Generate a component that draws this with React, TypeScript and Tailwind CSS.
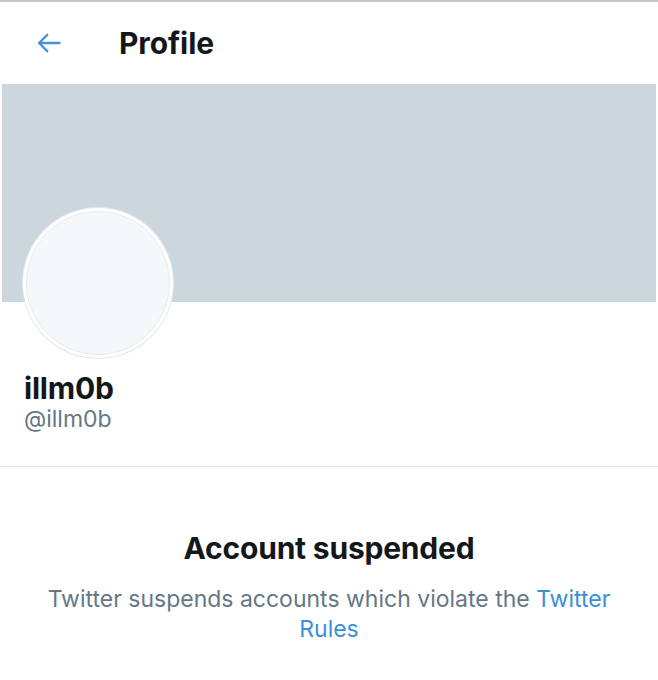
export default function App() {
  return (
    <div className="w-[658px] h-[680px] bg-white overflow-hidden font-['Inter',sans-serif] text-[#14171a]">
      {/* Header */}
      <div className="h-[84px] border-t-2 border-[#c8c8c8] flex items-center">
        <svg className="ml-[35px] w-[28px] h-[28px] text-[#4a90d9]" viewBox="0 0 24 24" fill="none" stroke="currentColor" strokeWidth="2" strokeLinecap="round" strokeLinejoin="round">
          <path d="M21 12H3.5M10.5 5l-7 7 7 7" />
        </svg>
        <h1 className="ml-[56px] text-[30px] font-bold tracking-[-0.1px]">Profile</h1>
      </div>

      {/* Banner */}
      <div className="h-[218px] mx-[2px] bg-[#ccd6dd]" />

      {/* Avatar + names */}
      <div className="px-[24px]">
        <div className="-mt-[94px] -ml-[1px] w-[150px] h-[150px] rounded-full bg-white p-[3px] shadow-[0_0_0_1px_#e1e8ed]">
          <div className="w-full h-full rounded-full bg-[#f5f8fa] border border-[#e6ecf0]" />
        </div>
        <div className="mt-[12px] text-[30px] font-bold leading-[36px] tracking-[-0.2px]">illm0b</div>
        <div className="-mt-[2px] text-[23px] leading-[30px] text-[#657786]">@illm0b</div>
      </div>

      <div className="mt-[32px] border-t border-[#e1e8ed]" />

      {/* Suspended notice */}
      <div className="pt-[63px] px-[36px] text-center">
        <div className="text-[30px] font-bold leading-[36px] tracking-[-0.2px]">Account suspended</div>
        <p className="mt-[18px] text-[23px] leading-[30px] text-[#657786]">
          Twitter suspends accounts which violate the <span className="text-[#3b8fd9]">Twitter Rules</span>
        </p>
      </div>
    </div>
  );
}
